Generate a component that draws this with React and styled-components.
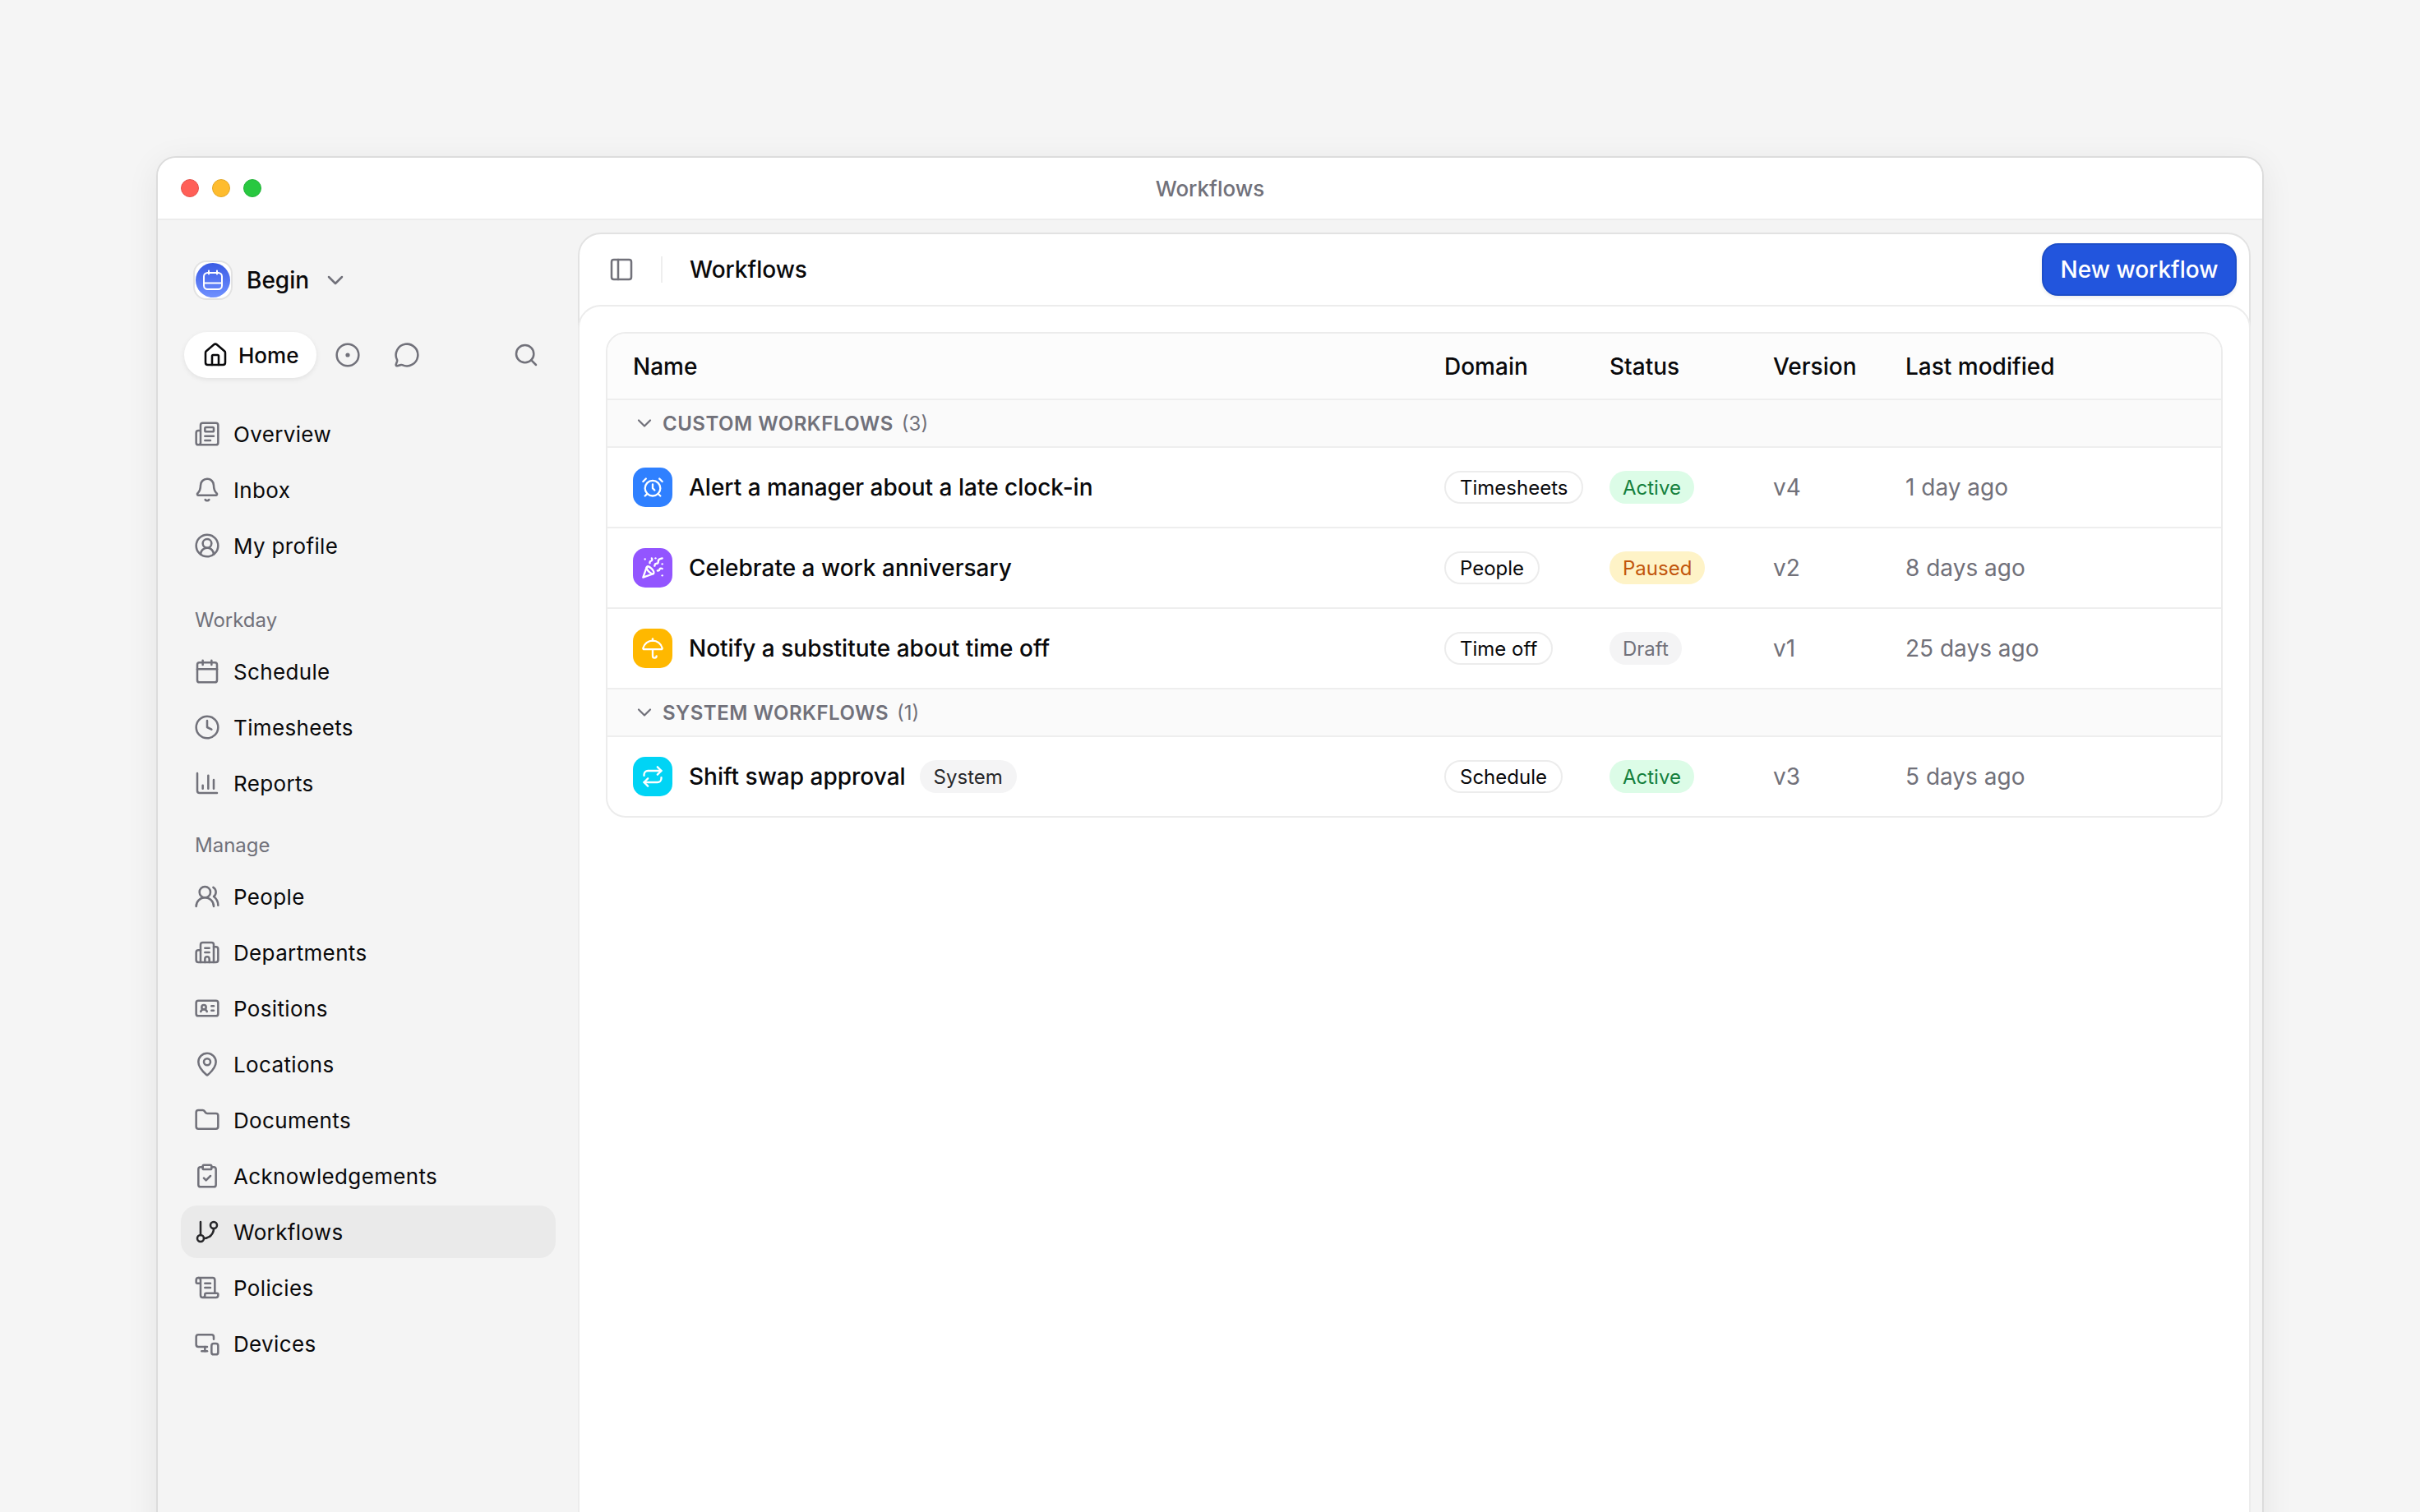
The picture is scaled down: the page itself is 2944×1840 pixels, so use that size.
import React from 'react';
import styled, {createGlobalStyle} from 'styled-components';
import {
    AlarmClock, Bell, Building2, ChartColumn, ChevronDown, CircleDot, CircleUserRound, Calendar, ClipboardCheck,
    Clock, Folder, GitBranch, House, IdCard, MapPin, MessageCircle, MonitorSmartphone, Newspaper, PanelLeft,
    PartyPopper, Repeat, ScrollText, Search, Umbrella, UsersRound,
} from 'lucide-react';

const GlobalStyle = createGlobalStyle`
    html, body {
        margin: 0;
        height: 1840px;
        overflow: hidden;
        background: #f5f5f5;
    }
    body {
        font-family: Inter, "Noto Sans", sans-serif;
        color: #09090b;
        -webkit-font-smoothing: antialiased;
    }
    * { box-sizing: border-box; }
`;

const topItems = [
    {label: 'Overview', icon: Newspaper},
    {label: 'Inbox', icon: Bell},
    {label: 'My profile', icon: CircleUserRound},
];

const sections = [
    {
        title: 'Workday',
        items: [
            {label: 'Schedule', icon: Calendar},
            {label: 'Timesheets', icon: Clock},
            {label: 'Reports', icon: ChartColumn},
        ],
    },
    {
        title: 'Manage',
        items: [
            {label: 'People', icon: UsersRound},
            {label: 'Departments', icon: Building2},
            {label: 'Positions', icon: IdCard},
            {label: 'Locations', icon: MapPin},
            {label: 'Documents', icon: Folder},
            {label: 'Acknowledgements', icon: ClipboardCheck},
            {label: 'Workflows', icon: GitBranch, active: true},
            {label: 'Policies', icon: ScrollText},
            {label: 'Devices', icon: MonitorSmartphone},
        ],
    },
];

const groups = [
    {
        title: 'CUSTOM WORKFLOWS',
        count: 3,
        rows: [
            {name: 'Alert a manager about a late clock-in', icon: AlarmClock, color: '#2f80ff', domain: 'Timesheets', status: 'Active', version: 'v4', modified: '1 day ago'},
            {name: 'Celebrate a work anniversary', icon: PartyPopper, color: '#9355ff', domain: 'People', status: 'Paused', version: 'v2', modified: '8 days ago'},
            {name: 'Notify a substitute about time off', icon: Umbrella, color: '#ffb800', domain: 'Time off', status: 'Draft', version: 'v1', modified: '25 days ago'},
        ],
    },
    {
        title: 'SYSTEM WORKFLOWS',
        count: 1,
        rows: [
            {name: 'Shift swap approval', icon: Repeat, color: '#00d4f5', system: true, domain: 'Schedule', status: 'Active', version: 'v3', modified: '5 days ago'},
        ],
    },
];

const NavItem = ({item})=>{
    const Icon = item.icon;
    return (
        <NavRow $active={item.active}>
            <Icon size={32} strokeWidth={1.9}/>
            {item.label}
        </NavRow>
    );
}

const App = ()=>{
    return (
        <Page>
            <GlobalStyle/>
            <Window>
                <TitleBar>
                    <Lights>
                        <Light $color="#ff5f57" $edge="#e5524c"/>
                        <Light $color="#febc2e" $edge="#e3a827"/>
                        <Light $color="#28c840" $edge="#23b339"/>
                    </Lights>
                    Workflows
                </TitleBar>
                <Body>
                    <Sidebar>
                        <Brand>
                            <Logo>
                                <LogoDisc>
                                    <svg width="28" height="28" viewBox="0 0 28 28" fill="none" stroke="#fff" strokeWidth="2" strokeLinecap="round">
                                        <rect x="3" y="5" width="22" height="20" rx="4.5"/>
                                        <path d="M9 2.5v4M19 2.5v4M3 17.5h22"/>
                                    </svg>
                                </LogoDisc>
                            </Logo>
                            <BrandName>Begin</BrandName>
                            <BrandChevron size={32} strokeWidth={1.9}/>
                        </Brand>
                        <Tabs>
                            <HomeTab>
                                <House size={32} strokeWidth={1.9}/>
                                Home
                            </HomeTab>
                            <TabIcon><CircleDot size={32} strokeWidth={1.9}/></TabIcon>
                            <TabIcon><MessageCircle size={32} strokeWidth={1.9}/></TabIcon>
                            <SearchIcon><Search size={32} strokeWidth={1.9}/></SearchIcon>
                        </Tabs>
                        <NavList>
                            {topItems.map(item=><NavItem key={item.label} item={item}/>)}
                        </NavList>
                        {sections.map((section, i)=>(
                            <NavSection key={section.title} $first={i === 0}>
                                <SectionLabel>{section.title}</SectionLabel>
                                <NavList>
                                    {section.items.map(item=><NavItem key={item.label} item={item}/>)}
                                </NavList>
                            </NavSection>
                        ))}
                    </Sidebar>
                    <Main>
                        <Panel>
                            <PanelHeader>
                                <PanelLeft size={32} strokeWidth={1.9} color="#71717a"/>
                                <Divider/>
                                <PanelTitle>Workflows</PanelTitle>
                                <PrimaryButton>New workflow</PrimaryButton>
                            </PanelHeader>
                            <Content>
                                <Table>
                                    <HeadRow>
                                        <span>Name</span>
                                        <span>Domain</span>
                                        <span>Status</span>
                                        <span>Version</span>
                                        <span>Last modified</span>
                                    </HeadRow>
                                    {groups.map(group=>(
                                        <React.Fragment key={group.title}>
                                            <GroupRow>
                                                <ChevronDown size={28} strokeWidth={1.9}/>
                                                <GroupTitle>{group.title}</GroupTitle>
                                                <GroupCount>({group.count})</GroupCount>
                                            </GroupRow>
                                            {group.rows.map(row=>{
                                                const Icon = row.icon;
                                                return (
                                                    <Row key={row.name}>
                                                        <NameCell>
                                                            <RowIcon $color={row.color}><Icon size={28} strokeWidth={2}/></RowIcon>
                                                            <RowName>{row.name}</RowName>
                                                            {row.system && <SystemTag>System</SystemTag>}
                                                        </NameCell>
                                                        <div><DomainTag>{row.domain}</DomainTag></div>
                                                        <div><StatusTag $status={row.status}>{row.status}</StatusTag></div>
                                                        <Muted>{row.version}</Muted>
                                                        <Muted>{row.modified}</Muted>
                                                    </Row>
                                                );
                                            })}
                                        </React.Fragment>
                                    ))}
                                </Table>
                            </Content>
                        </Panel>
                    </Main>
                </Body>
            </Window>
        </Page>
    );
}

const statusColors = {
    Active: {bg: '#dcfce7', fg: '#15803d'},
    Paused: {bg: '#fef3c7', fg: '#c2560c'},
    Draft: {bg: '#f4f4f5', fg: '#71717a'},
};

const columns = '987px 201px 199px 161px 1fr';

const Page = styled.div`
    padding: 190px 190px 0;
    height: 1840px;
    overflow: hidden;
`;

const Window = styled.div`
    height: 1800px;
    background: #f4f4f4;
    border: 2px solid #dcdcdc;
    border-radius: 24px;
    box-shadow: 0 8px 40px rgba(0,0,0,.07);
    overflow: hidden;
`;

const TitleBar = styled.header`
    position: relative;
    height: 76px;
    background: #fff;
    border-bottom: 2px solid #ececec;
    display: flex;
    align-items: center;
    justify-content: center;
    font-size: 26px;
    font-weight: 500;
    color: #71717a;
`;

const Lights = styled.div`
    position: absolute;
    left: 28px;
    top: 26px;
    display: flex;
    gap: 16px;
`;

const Light = styled.span`
    width: 22px;
    height: 22px;
    border-radius: 50%;
    background: ${p=>p.$color};
    border: 1px solid ${p=>p.$edge};
`;

const Body = styled.div`
    display: grid;
    grid-template-columns: 511px 1fr;
`;

const Sidebar = styled.aside`
    padding: 50px 27px 0 28px;
`;

const Brand = styled.div`
    display: flex;
    align-items: center;
    height: 46px;
    padding-left: 15px;
`;

const Logo = styled.div`
    width: 48px;
    height: 48px;
    border-radius: 16px;
    background: #fff;
    border: 2px solid #e2e2e2;
    display: flex;
    align-items: center;
    justify-content: center;
`;

const LogoDisc = styled.div`
    width: 42px;
    height: 42px;
    flex: none;
    border-radius: 50%;
    background: linear-gradient(180deg, #3a5be4, #6f90ff);
    display: flex;
    align-items: center;
    justify-content: center;
`;

const BrandName = styled.span`
    margin-left: 17px;
    font-size: 28px;
    font-weight: 500;
`;

const BrandChevron = styled(ChevronDown)`
    margin-left: 16px;
    color: #71717a;
`;

const Tabs = styled.div`
    display: flex;
    align-items: center;
    height: 56px;
    margin-top: 40px;
    padding-left: 4px;
    color: #71717a;
`;

const HomeTab = styled.div`
    display: flex;
    align-items: center;
    gap: 12px;
    height: 56px;
    width: 161px;
    padding-left: 22px;
    border-radius: 28px;
    background: #fff;
    box-shadow: 0 2px 6px rgba(0,0,0,.08);
    color: #09090b;
    font-size: 26px;
    font-weight: 500;
`;

const TabIcon = styled.div`
    display: flex;
    margin-left: 22px;
    & + & {
        margin-left: 40px;
    }
`;

const SearchIcon = styled.div`
    display: flex;
    margin-left: auto;
    margin-right: 20px;
`;

const NavList = styled.nav`
    display: flex;
    flex-direction: column;
    gap: 4px;
    margin-top: 36px;
`;

const NavRow = styled.a`
    display: flex;
    align-items: center;
    gap: 16px;
    height: 64px;
    padding-left: 16px;
    border-radius: 20px;
    font-size: 26px;
    letter-spacing: .35px;
    background: ${p=>p.$active ? '#eaeaea' : 'transparent'};
    svg {
        color: ${p=>p.$active ? '#27272a' : '#71717a'};
    }
`;

const NavSection = styled.section`
    margin-top: ${p=>p.$first ? '41px' : '26px'};
    ${NavList} {
        margin-top: 12px;
    }
`;

const SectionLabel = styled.div`
    height: 36px;
    line-height: 36px;
    padding-left: 17px;
    font-size: 24px;
    color: #71717a;
`;

const Main = styled.main`
    padding: 15px 14px 0 0;
`;

const Panel = styled.section`
    height: 1700px;
    background: #fff;
    border: 2px solid #e2e2e2;
    border-radius: 28px;
`;

const PanelHeader = styled.div`
    display: flex;
    align-items: center;
    height: 86px;
    padding: 0 15px 0 35px;
`;

const Divider = styled.span`
    width: 2px;
    height: 32px;
    margin: 0 33px 0 32px;
    background: #eeeeee;
`;

const PanelTitle = styled.h1`
    margin: 0;
    font-size: 28px;
    font-weight: 450;
`;

const PrimaryButton = styled.button`
    margin-left: auto;
    width: 237px;
    height: 64px;
    border-radius: 20px;
    border: 2px solid #1d4ec9;
    background: #2255dd;
    box-shadow: 0 2px 4px rgba(0,0,0,.08);
    color: #fff;
    font-family: inherit;
    font-size: 28px;
    font-weight: 500;
`;

const Content = styled.div`
    margin: 0 -2px;
    height: 100%;
    padding: 31px 32px 32px;
    border: 2px solid #ececec;
    border-radius: 28px;
`;

const Table = styled.div`
    border: 2px solid #ececec;
    border-radius: 24px;
    overflow: hidden;
`;

const HeadRow = styled.div`
    display: grid;
    grid-template-columns: ${columns};
    align-items: center;
    height: 79px;
    padding-left: 31px;
    background: #fcfcfc;
    font-size: 28px;
    font-weight: 450;
`;

const GroupRow = styled.div`
    display: flex;
    align-items: center;
    height: 58px;
    padding-left: 31px;
    background: #fafafa;
    border-top: 2px solid #eeeeee;
    color: #71717a;
    font-size: 24px;
`;

const GroupTitle = styled.span`
    margin-left: 8px;
    font-weight: 600;
    letter-spacing: .5px;
`;

const GroupCount = styled.span`
    margin-left: 10px;
`;

const Row = styled.div`
    display: grid;
    grid-template-columns: ${columns};
    align-items: center;
    height: 98px;
    padding-left: 31px;
    border-top: 2px solid #eeeeee;
    font-size: 28px;
`;

const NameCell = styled.div`
    display: flex;
    align-items: center;
`;

const RowIcon = styled.span`
    display: flex;
    align-items: center;
    justify-content: center;
    width: 48px;
    height: 48px;
    border-radius: 15px;
    background: ${p=>p.$color};
    color: #fff;
`;

const RowName = styled.span`
    margin-left: 20px;
    font-weight: 480;
`;

const Tag = styled.span`
    display: inline-flex;
    align-items: center;
    height: 40px;
    border-radius: 20px;
    font-size: 24px;
`;

const SystemTag = styled(Tag)`
    margin-left: 17px;
    padding: 0 17px;
    background: #f4f4f5;
    color: #27272a;
`;

const DomainTag = styled(Tag)`
    padding: 0 17px;
    background: #fff;
    border: 2px solid #ececec;
`;

const StatusTag = styled(Tag)`
    padding: 0 16px;
    background: ${p=>statusColors[p.$status].bg};
    color: ${p=>statusColors[p.$status].fg};
`;

const Muted = styled.span`
    color: #71717a;
`;

export default App;
